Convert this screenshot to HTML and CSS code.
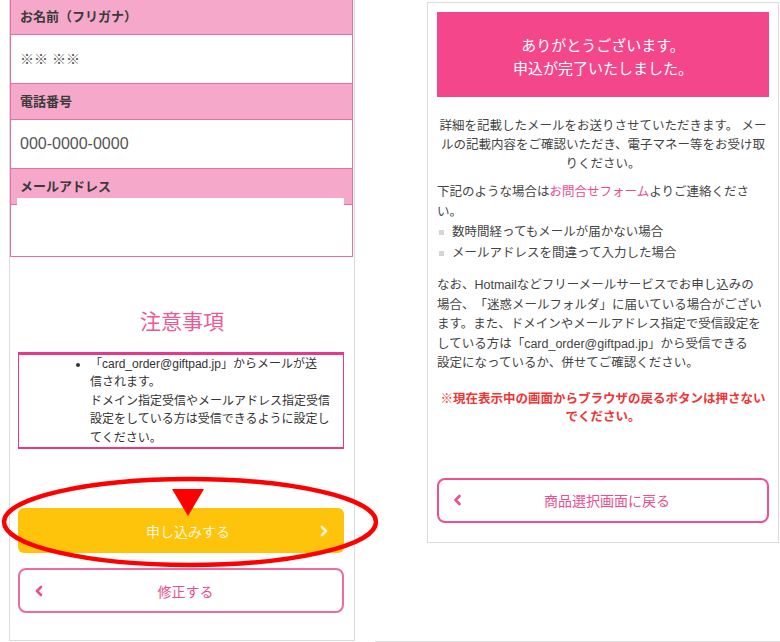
FILE: index.html
```html
<!DOCTYPE html>
<html lang="ja">

<head>
    <meta charset="UTF-8">
    <meta name="viewport" content="width=device-width, initial-scale=1.0">
    <title>申込確認 - 申込完了</title>
    <link rel="stylesheet" href="styles.css">
</head>

<body>
    <div class="page">
        <!-- 確認画面 -->
        <div class="panel panel-form">
            <div class="fields">
                <div class="field-label">お名前（フリガナ）</div>
                <div class="field-value">※※ ※※</div>
                <div class="field-label">電話番号</div>
                <div class="field-value field-tel">000-0000-0000</div>
                <div class="field-label">メールアドレス</div>
                <div class="field-email"></div>
            </div>

            <h2 class="notice-title">注意事項</h2>
            <div class="notice">
                <ul>
                    <li>「card_order@giftpad.jp」からメールが送<br>信されます。<br>ドメイン指定受信やメールアドレス指定受信設定をしている方は受信できるように設定してください。</li>
                </ul>
            </div>

            <button class="btn btn-submit">
                <span></span>
                <span class="btn-text">申し込みする</span>
                <svg class="chevron" width="8" height="12" viewBox="0 0 8 12"><path d="M2 2 L6 6 L2 10" /></svg>
            </button>
            <button class="btn btn-outline btn-edit">
                <svg class="chevron" width="8" height="12" viewBox="0 0 8 12"><path d="M6 2 L2 6 L6 10" /></svg>
                <span class="btn-text">修正する</span>
                <span></span>
            </button>
        </div>

        <!-- 完了画面 -->
        <div class="side">
            <div class="panel panel-done">
                <div class="done-banner">ありがとうございます。<br>申込が完了いたしました。</div>
                <div class="done-body">
                    <p class="lead">詳細を記載したメールをお送りさせていただきます。 メールの記載内容をご確認いただき、電子マネー等をお受け取りください。</p>
                    <p class="contact">下記のような場合は<a href="#">お問合せフォーム</a>よりご連絡ください。</p>
                    <ul class="cases">
                        <li>数時間経ってもメールが届かない場合</li>
                        <li>メールアドレスを間違って入力した場合</li>
                    </ul>
                    <p class="note">なお、Hotmailなどフリーメールサービスでお申し込みの<br>場合、「迷惑メールフォルダ」に届いている場合がござい<br>ます。また、ドメインやメールアドレス指定で受信設定を<br>している方は「card_order@giftpad.jp」から受信できる<br>設定になっているか、併せてご確認ください。</p>
                    <p class="warn">※現在表示中の画面からブラウザの戻るボタンは押さないでください。</p>
                </div>
                <button class="btn btn-outline btn-return">
                    <svg class="chevron" width="9" height="12" viewBox="0 0 9 12"><path d="M6.5 2 L2.5 6 L6.5 10" /></svg>
                    <span class="btn-text">商品選択画面に戻る</span>
                    <span></span>
                </button>
            </div>
        </div>

        <!-- 赤丸の注釈 -->
        <svg class="mark" width="780" height="642" viewBox="0 0 780 642">
            <ellipse cx="190" cy="522" rx="186" ry="43" fill="none" stroke="#f00" stroke-width="4.5" />
            <polygon points="172,489 204,489 188,516" fill="#f00" />
        </svg>
    </div>
</body>

</html>
```

FILE: styles.css
```css
body {
    margin: 0;
    background-color: #fff;
    font-family: "Liberation Sans", "Noto Sans CJK JP", sans-serif;
    text-spacing-trim: space-all;
    overflow: hidden;
}

.page {
    position: relative;
    display: flex;
    align-items: flex-start;
    height: 642px;
    padding-left: 9px;
    overflow: hidden;
}

.panel {
    box-sizing: border-box;
    border: 1px solid #dcdcdc;
    background-color: #fff;
}

/* 左：確認画面 */
.panel-form {
    width: 346px;
    height: 642px;
    margin-top: -1px;
    border-top: 0;
}

.fields {
    margin-right: 1px;
    border: 1px solid #ea6ea2;
    border-top: 0;
}

.field-label {
    box-sizing: border-box;
    height: 36px;
    padding-left: 9px;
    border-bottom: 1px solid #ea6ea2;
    background-color: #f5a8c9;
    color: #3a3a3a;
    font-size: 13px;
    font-weight: bold;
    line-height: 35px;
}

.field-value {
    box-sizing: border-box;
    height: 49px;
    padding-left: 9px;
    border-bottom: 1px solid #ea6ea2;
    background-color: #fff;
    color: #555;
    font-size: 14px;
    line-height: 48px;
}

.field-tel {
    font-size: 16px;
}

.field-email {
    height: 58px;
    margin: -7px 8px 0 6px;
    background-color: #fff;
}

.notice-title {
    margin: 50px 0 0;
    color: #ec5a98;
    font-size: 21px;
    font-weight: normal;
    line-height: 30px;
    text-align: center;
}

.notice {
    margin: 15px 10px 0 8px;
    border: 1px solid #e8388a;
    border-top-width: 3px;
    border-bottom-width: 2px;
}

.notice ul {
    margin: 0;
    padding: 0 4px 0 71px;
}

.notice li {
    color: #333;
    font-size: 12px;
    line-height: 18.4px;
}

/* ボタン */
.btn {
    box-sizing: border-box;
    display: grid;
    grid-template-columns: 20px 1fr 20px;
    align-items: center;
    height: 45px;
    padding: 0;
    border: 0;
    font-family: inherit;
    font-size: 14px;
    text-align: center;
    background: none;
}

.btn .chevron {
    justify-self: center;
}

.chevron path {
    fill: none;
    stroke: currentColor;
    stroke-width: 2.6;
    stroke-linecap: round;
    stroke-linejoin: round;
}

.btn-submit {
    width: 326px;
    margin: 59px 10px 0 8px;
    padding: 0 10px 0 24px;
    border-radius: 6px;
    background-color: #fdc40b;
    color: #fff6dc;
}

.btn-outline {
    border: 2px solid #ef4f93;
    border-radius: 8px;
    background-color: #fff;
    color: #ea4f90;
}

.btn-edit {
    width: 326px;
    margin: 15px 10px 0 8px;
    padding-left: 9px;
    border-color: #ee6aa2;
}

/* 右：完了画面 */
.side {
    box-sizing: border-box;
    width: 405px;
    height: 642px;
    margin-left: 20px;
    border-bottom: 1px solid #dcdcdc;
}

.panel-done {
    width: 352px;
    margin: 2px 0 0 52px;
    padding: 9px 9px 19px;
}

.done-banner {
    box-sizing: border-box;
    height: 85px;
    padding-top: 22px;
    background-color: #f4468a;
    color: #fff;
    font-size: 15px;
    line-height: 23px;
    text-align: center;
}

.done-body {
    color: #444;
    font-size: 12.5px;
}

.done-body p {
    margin: 0;
}

.done-body a {
    color: #ec4a8f;
    text-decoration: none;
}

.done-body .lead {
    margin-top: 20px;
    line-height: 19px;
    text-align: center;
}

.done-body .contact {
    margin-top: 8px;
    line-height: 20px;
}

.cases {
    margin: 0;
    padding: 0;
    list-style: none;
    line-height: 21px;
}

.cases li {
    display: flex;
    align-items: center;
}

.cases li::before {
    content: "";
    width: 5px;
    height: 5px;
    margin: 0 8px 0 2px;
    background-color: #d6d6d6;
}

.done-body .note {
    margin-top: 12px;
    line-height: 19.5px;
}

.done-body .warn {
    margin-top: 16px;
    color: #f03434;
    font-weight: bold;
    line-height: 18px;
    text-align: center;
}

.btn-return {
    width: 100%;
    margin-top: 52px;
    padding-left: 8px;
}

/* 注釈 */
.mark {
    position: absolute;
    top: 0;
    left: 0;
    pointer-events: none;
}
```
